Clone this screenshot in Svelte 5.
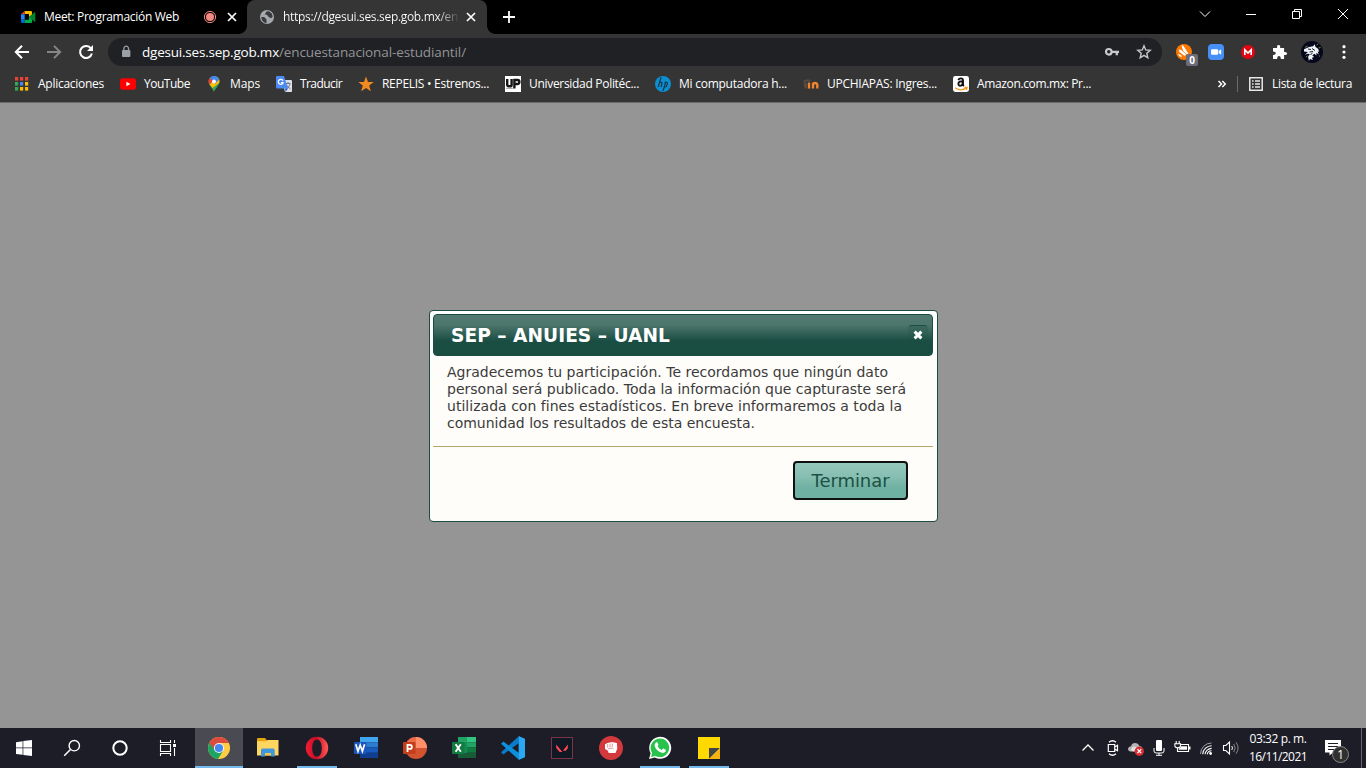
<script>
  // Spreads the letters of a label so that it fills the given width.
  function fit(node, width) {
    const range = document.createRange();
    range.selectNodeContents(node);
    const natural = range.getBoundingClientRect().width;
    node.style.letterSpacing = (width - natural) / node.textContent.length + 'px';
  }

  const bookmarks = [
    { icon: 'apps', text: 'Aplicaciones', w: 66 },
    { icon: 'youtube', text: 'YouTube', w: 46 },
    { icon: 'maps', text: 'Maps', w: 30 },
    { icon: 'translate', text: 'Traducir', w: 42 },
    { icon: 'star', text: 'REPELIS • Estrenos...', w: 107 },
    { icon: 'up', text: 'Universidad Politéc...', w: 110 },
    { icon: 'hp', text: 'Mi computadora h...', w: 108 },
    { icon: 'moodle', text: 'UPCHIAPAS: Ingres...', w: 110 },
    { icon: 'amazon', text: 'Amazon.com.mx: Pr...', w: 114 }
  ];
  const apps = [
    { icon: 'chrome', active: true, open: true },
    { icon: 'explorer' },
    { icon: 'opera', open: true },
    { icon: 'word' },
    { icon: 'powerpoint' },
    { icon: 'excel' },
    { icon: 'vscode' },
    { icon: 'valorant' },
    { icon: 'fist' },
    { icon: 'whatsapp', open: true },
    { icon: 'notes', open: true }
  ];
</script>

{#snippet closeX()}
  <svg width="16" height="16" viewBox="0 0 16 16"><path d="M4 4l8 8M12 4l-8 8" stroke="#fff" stroke-width="1.7" /></svg>
{/snippet}

{#snippet favicon(name)}
  <svg width="16" height="16" viewBox="0 0 16 16">
    {#if name === 'apps'}
      {#each ['#ea4335', '#ea4335', '#ea4335', '#34a853', '#4285f4', '#fbbc04', '#34a853', '#fbbc04', '#fbbc04'] as c, i}
        <rect x={1 + (i % 3) * 5} y={1 + Math.floor(i / 3) * 5} width="3.2" height="3.6" fill={c} />
      {/each}
    {:else if name === 'youtube'}
      <rect y="2.3" width="16" height="11.4" rx="2.6" fill="#f00" /><path d="M6.4 5.7v4.6l4-2.3z" fill="#fff" />
    {:else if name === 'maps'}
      <path d="M8 16C7 12 2.6 10 2.6 5.4A5.4 5.4 0 0 1 13.4 5.4C13.4 10 9 12 8 16z" fill="#34a853" />
      <path d="M3.3 8.1l7.9-7.2A5.5 5.5 0 0 1 13.2 7L6.5 12z" fill="#fbbc04" />
      <path d="M3.9 2A5.4 5.4 0 0 1 11.2.9L6 6.7z" fill="#4285f4" /><path d="M3.9 2L7 5 3.5 8.4A5.3 5.3 0 0 1 3.9 2z" fill="#ea4335" />
      <path d="M11.2.9A5.4 5.4 0 0 1 13 3.4L9 8 7 5.5z" fill="#4285f4" /><circle cx="8" cy="5.5" r="2" fill="#fff" />
    {:else if name === 'translate'}
      <path d="M6 4h9a1 1 0 0 1 1 1v10a1 1 0 0 1-1 1H9z" fill="#dcdfe3" />
      <path d="M9.5 7.5h5M12 6v1.5M14 8c-.6 2.4-2 3.6-4 4.7M10.4 8.5c1 2 2 3.2 4 4.2" stroke="#6d7b8d" fill="none" />
      <path d="M1 0h7l4 12.5H1a1 1 0 0 1-1-1V1a1 1 0 0 1 1-1z" fill="#4c8bf5" /><path d="M9 12.5h3L9.6 16z" fill="#3367d6" />
      <path d="M7 4.6A2.5 2.5 0 1 0 7.2 6.6H5" stroke="#fff" stroke-width="1.2" fill="none" />
    {:else if name === 'star'}
      <path d="M8 .5l2 5.4 5.7.2-4.5 3.5 1.6 5.6L8 12l-4.8 3.2 1.6-5.6L.3 6.1 6 5.9z" fill="#f28a22" />
    {:else if name === 'up'}
      <rect width="16" height="16" fill="#fff" />
      <path d="M2.2 3v5.4q0 1.8 1.8 1.8h1.6q1 0 1-1V3M9.4 12.5V4h3q2 0 2 1.9T12.2 8H9.4" stroke="#141414" stroke-width="2.4" fill="none" /><path d="M1 12.3h6.8" stroke="#777" stroke-width=".8" />
    {:else if name === 'hp'}
      <circle cx="8" cy="8" r="8" fill="#0b8fd0" />
      <path d="M6.1 1.2L3.3 11M4.7 6.4h1.4q1.2 0 .9 1.2L6 11M10.8 5.7L8 15M9.5 6.4h2q1.2 0 .8 1.4l-.6 2q-.3 1-1.4 1H8.8" stroke="#17364d" stroke-width="1.2" fill="none" />
    {:else if name === 'moodle'}
      <path d="M0 5l4-1.7 4 .5-1 2H3L2 7v4.5H.8V6z" fill="#514a46" />
      <path d="M3 7v5.6" stroke="#7a4d2c" stroke-width="1.4" />
      <path d="M6 6.6v6" stroke="#ef8430" stroke-width="2.3" /><path d="M10 12.6V7M10 9q0-2 2-2t2.3 2v3.6" stroke="#ef8430" stroke-width="2.4" fill="none" />
    {:else if name === 'amazon'}
      <rect width="16" height="16" rx="2.4" fill="#fff" />
      <path d="M5.3 4.2Q6.1 2.3 8 2.4t2 2.2v4q0 .9 1 1.4M9.7 5.3Q5.4 5.3 5.4 7.7t2.4 1.9Q9.7 9.5 9.8 6.4" stroke="#111" stroke-width="1.9" fill="none" />
      <path d="M2 11.7q6 4.2 11.5.2M11.5 11.5h2.6l-.7 2.5" stroke="#f79a1b" stroke-width="1.3" fill="none" />
    {/if}
  </svg>
{/snippet}

{#snippet appIcon(name)}
  <svg width="24" height="24" viewBox="0 0 24 24">
    {#if name === 'chrome'}
      <circle cx="12" cy="12" r="11" fill="#ffcd43" />
      <path d="M12 12L2.5 6.5A11 11 0 0 0 11 23l5-8z" fill="#1da462" /><path d="M12 12v-5h9.8A11 11 0 0 0 2.4 6.7L7.5 14z" fill="#dd4b3e" />
      <circle cx="12" cy="12" r="5.1" fill="#f4f4f4" /><circle cx="12" cy="12" r="4.1" fill="#4688f1" />
    {:else if name === 'explorer'}
      <path d="M1 3q0-1 1-1h7l2 2.3h11V7H1z" fill="#e5a50f" /><path d="M1 5.3h9L12 4h10.5v15.5H1z" fill="#ffd760" />
      <path d="M5 20.5V14q0-1.5 1.5-1.5h10.8q1.4 0 1.4 1.5v6.5h-4V17H9v3.5z" fill="#3f97dd" /><path d="M9 17h5.7v2.5H9z" fill="#f6c447" />
    {:else if name === 'opera'}
      <defs><linearGradient id="op" x1="0" x2="1"><stop offset="0" stop-color="#f41c35" /><stop offset=".45" stop-color="#c70e25" /><stop offset="1" stop-color="#ff5a55" /></linearGradient></defs>
      <path fill-rule="evenodd" fill="url(#op)" d="M12 .8a11.2 11.2 0 1 0 0 22.4A11.2 11.2 0 1 0 12 .8zM12 3.4c3 0 4.8 3.6 4.8 8.6s-1.8 8.6-4.8 8.6S7.2 17 7.2 12 9 3.4 12 3.4z" />
    {:else if name === 'word' || name === 'excel'}
      {#each (name === 'word' ? ['#41a5ee', '#2b7cd3', '#185abd', '#103f91'] : ['#33c481', '#21a366', '#107c41', '#185c37']) as c, i}
        <rect x="6" y={1 + i * 5.25} width="18" height="5.25" fill={c} />
      {/each}
      {#if name === 'excel'}<path d="M6 1h9v16H6z" fill="#178b51" /><path d="M6 1h9v5.3H6z" fill="#21a366" />{/if}
      <rect x="0" y="6" width="12.5" height="12" rx="1" fill={name === 'word' ? '#1b56bd' : '#107c41'} />
      {#if name === 'word'}<path d="M1.8 8.2L4 15.3 6.2 9 8.4 15.3 10.6 8.2" stroke="#fff" stroke-width="1.7" fill="none" />
      {:else}<path d="M3.6 8.2l5.2 7.6M8.8 8.2l-5.2 7.6" stroke="#fff" stroke-width="1.9" />{/if}
    {:else if name === 'powerpoint'}
      <circle cx="13" cy="12" r="11" fill="#d35230" /><path d="M13 12V1A11 11 0 0 0 2 12z" fill="#ed6c47" /><path d="M13 12V1a11 11 0 0 1 11 11z" fill="#ff8f6b" />
      <rect y="6" width="12.5" height="12" rx="1" fill="#c43e1c" /><path d="M4.5 16V8.9h2.2q2.2 0 2.2 2t-2.2 2H4.7" stroke="#fff" stroke-width="1.8" fill="none" />
    {:else if name === 'vscode'}
      <path d="M17.8.3L24 3v18l-6.2 2.8z" fill="#29a8f2" /><path d="M17.8.3L0 16.3l2.3 2.2L18 7z" fill="#0b7ac8" /><path d="M17.8 23.7L0 7.8l2.3-2.2L18 17z" fill="#0d91df" /><path d="M17.8.3v23.4L24 21V3z" fill="#2aa9f3" />
    {:else if name === 'valorant'}
      <rect x="1.5" y="1.5" width="21" height="21" fill="#101823" stroke="#7d3347" /><path d="M6.2 8.4l6.2 7.5H9.6l-3.4-4zM17.8 8.4v3.8l-2 2.5h-2.9z" fill="#ff4655" />
    {:else if name === 'fist'}
      <circle cx="12" cy="12" r="12" fill="#d3383d" />
      <path d="M6 8.2l2.6-1.2 2.3-.4 2.2-.5 2 .3 2.8.7.4 5.5-1.8 4.4H9.7l-1-2.6L6 13z" fill="#fff" /><path d="M8.7 8v3.7M11 7.6v3.6M13.3 7.4v3.4M9.2 12.9l4-.9 1.3 1" stroke="#d3383d" stroke-width=".55" fill="none" />
    {:else if name === 'whatsapp'}
      <path d="M1 23l1.6-5.8A11 11 0 1 1 6.8 21.4z" fill="#fff" /><path d="M3 21l1.1-4.1A9.3 9.3 0 1 1 7.3 19.9z" fill="#29c24d" />
      <path d="M8.2 6.3q1-.5 1.4.5l.8 1.8q.1.6-.9 1.6 1.6 2.8 4.3 3.7l1.3-1.4 2.7 1.3q.3 2.9-3 3.1Q8 15.8 6.6 9.5q-.2-2 1.6-3.2z" fill="#fff" />
    {:else if name === 'notes'}
      <path d="M1 1h22v22H1z" fill="#ffd900" /><path d="M12 23V12h11z" fill="#414449" /><path d="M12 23l11-11v11z" fill="#f6b40e" />
    {/if}
  </svg>
{/snippet}

<div class="screen">
  <header class="tabs">
    <div class="tab first">
      <svg width="16" height="16" viewBox="0 0 16 16">
        <path d="M4.7 2H11q1 0 1 1v3.5L9 8V5H4.7z" fill="#fbbc04" /><path d="M4.7 2v3.3H1z" fill="#ea4335" /><path d="M1 5.3h3.7v5.4H1z" fill="#2684fc" />
        <path d="M1 10.7h3.7V14H2q-1 0-1-1z" fill="#0066da" /><path d="M4.7 10.7H9V8l3-2.5V13q0 1-1 1H4.7z" fill="#00ac47" /><path d="M9 8l5.5-4.7q.8-.4.8.4v8.6q0 .8-.8.4z" fill="#00832d" />
      </svg>
      <span class="label" use:fit={135}>Meet: Programación Web</span>
      <svg class="rec" width="14" height="14" viewBox="0 0 14 14"><circle cx="7" cy="7" r="5.6" fill="none" stroke="#f28b82" /><circle cx="7" cy="7" r="4" fill="#f28b82" /></svg>
      {@render closeX()}
    </div>
    <div class="tab current">
      <svg width="16" height="16" viewBox="0 0 16 16"><circle cx="8" cy="8" r="7" fill="#a5a9ae" /><path d="M2.2 8h3l2.3 2.4v3.8q-4.8-.8-5.3-6.2zM7.5 2.5l2.3-.2 3 2.2.9 3.3-1.6 1.4-2.4-1.1-1.8-2.3-2.1-.3z" fill="#383a3d" /></svg>
      <span class="label fade" use:fit={175}>https://dgesui.ses.sep.gob.mx/en</span>
      {@render closeX()}
    </div>
    <svg class="plus" width="14" height="14" viewBox="0 0 14 14"><path d="M7 1v12M1 7h12" stroke="#fff" stroke-width="1.8" /></svg>
    <div class="window">
      <svg width="12" height="12" viewBox="0 0 12 12"><path d="M1 3.5l5 5 5-5" /></svg>
      <svg width="12" height="12" viewBox="0 0 12 12"><path d="M1 6.5h10" /></svg>
      <svg width="12" height="12" viewBox="0 0 12 12"><path d="M1.5 3.5h7v7h-7zM3.5 3.5v-2h7v7h-2" /></svg>
      <svg width="12" height="12" viewBox="0 0 12 12"><path d="M1 1l10 10M11 1L1 11" /></svg>
    </div>
  </header>

  <div class="toolbar">
    <svg width="16" height="16" viewBox="0 0 16 16"><path d="M15 8H2M8 1.8L1.8 8 8 14.2" stroke="#fff" stroke-width="2" fill="none" /></svg>
    <svg width="16" height="16" viewBox="0 0 16 16"><path d="M1 8h13M8 1.8L14.2 8 8 14.2" stroke="#868686" stroke-width="1.9" fill="none" /></svg>
    <svg width="16" height="16" viewBox="0 0 16 16"><path d="M13 4.5A6 6 0 1 0 13.9 9.5" stroke="#fff" stroke-width="2" fill="none" /><path d="M15 1v6H9z" fill="#fff" /></svg>
    <div class="omnibox">
      <svg width="10" height="14" viewBox="0 0 10 14"><rect x="1" y="5" width="8.4" height="7" rx="1" fill="#9aa0a6" /><path d="M2.9 5V3.5a2.3 2.3 0 0 1 4.6 0V5" stroke="#9aa0a6" stroke-width="1.3" fill="none" /></svg>
      <span class="url host" use:fit={137}>dgesui.ses.sep.gob.mx</span><span class="url path" use:fit={187}>/encuestanacional-estudiantil/</span>
      <svg class="key" width="16" height="12" viewBox="0 0 16 12"><circle cx="4.8" cy="5.8" r="2.8" fill="none" stroke="#c7c9cc" stroke-width="2.2" /><path d="M8 5.8h7M12.8 6v3.2" stroke="#c7c9cc" stroke-width="2.3" /></svg>
      <svg width="16" height="16" viewBox="0 0 16 16"><path d="M8 1.8l1.7 4.1 4.5.4-3.4 3 1 4.5L8 11.4l-3.8 2.4 1-4.5-3.4-3 4.5-.4z" fill="none" stroke="#c7c9cc" stroke-width="1.4" /></svg>
    </div>
    <div class="extensions">
      <div class="avast">
        <svg width="18" height="18" viewBox="0 0 18 18"><circle cx="9" cy="9" r="8" fill="#ff7800" /><path d="M6.5 2.6q1.2-.7 2 .5l4.9 7.3-1.2 1.4-4-3.8zM4.3 6.6q1-.5 1.9.4l5.2 4.8-2 .9L4.4 9Q3.7 7.8 4.3 6.6zM3.1 10.7q2.6.8 4.1 2.5l-1.5.7Q3.6 12.9 3.1 10.7z" fill="#fff" /></svg>
        <span class="badge">0</span>
      </div>
      <svg width="18" height="18" viewBox="0 0 18 18"><rect x="1" y="1" width="16" height="16" rx="4" fill="#468ff5" /><rect x="4" y="6.2" width="7.2" height="5.6" rx="1.2" fill="#fff" /><path d="M11.8 8l2.4-1.7v5.4L11.8 10z" fill="#fff" /></svg>
      <svg width="18" height="18" viewBox="0 0 18 18"><circle cx="9" cy="9" r="7" fill="#e30615" /><path d="M5.8 12V6.7L9 10l3.2-3.3V12" stroke="#fff" stroke-width="1.6" fill="none" /></svg>
      <svg width="18" height="18" viewBox="0 0 18 18"><path d="M2 5h4.2q-.7-3 1.4-3t1.5 3h4v4q3-.4 3 1.5t-3 1.5v4H9.8q0-3-1.8-3t-1.9 3H2v-4q2.8.1 2.8-1.7T2 8.6z" fill="#fff" /></svg>
      <svg width="22" height="22" viewBox="0 0 22 22"><circle cx="11" cy="11" r="11" fill="#05071d" /><path d="M3 8.2L8 6l4-.8 2-2 .2 2.4 3 2.4 1 3-1.5-.7 1 3.2-2.2-1.8-.2 2.8-1.8-1.7-2.2 1.5 1.8 1.7-2.2.8 1 2.2-3-1-1 2-.8-4.2 1.7-2.7-2-.4-2.8 1 2.8-2.8L3 10.5z" fill="#eef3f5" /><path d="M7 8l3 .5M11 7.5l3 2M8.5 11l3.5-.5M9.5 14l2-2.3" stroke="#05071d" stroke-width=".9" /><path d="M4 6.5L6.5 5M15.8 4.2l1.4-1.6M17.6 7l2-.6M17.8 14.5l1.3 1M5 16l1.5-1" stroke="#758b36" /></svg>
      <svg width="18" height="18" viewBox="0 0 18 18"><circle cx="9" cy="3.7" r="1.6" fill="#fff" /><circle cx="9" cy="9" r="1.6" fill="#fff" /><circle cx="9" cy="14.3" r="1.6" fill="#fff" /></svg>
    </div>
  </div>

  <nav class="bookmarks">
    {#each bookmarks as b}
      <div class="bookmark">{@render favicon(b.icon)}<span class="label" style:width="{b.w}px" use:fit={b.w}>{b.text}</span></div>
    {/each}
    <div class="reading">
      <svg width="10" height="10" viewBox="0 0 10 10"><path d="M1.5 2l3 3-3 3M5.3 2l3 3-3 3" stroke="#fff" stroke-width="1.5" fill="none" /></svg>
      <i></i>
      <svg width="14" height="14" viewBox="0 0 14 14"><path d="M.8.8h12.4v12.4H.8z" fill="none" stroke="#e8e8e8" stroke-width="1.5" /><path d="M3 4h1.6M6 4h5M3 7h1.6M6 7h5M3 10h1.6M6 10h5" stroke="#e8e8e8" stroke-width="1.5" /></svg>
      <span class="label" use:fit={80}>Lista de lectura</span>
    </div>
  </nav>

  <main>
    <section class="dialog">
      <div class="title">
        <h1 use:fit={219}>SEP – ANUIES – UANL</h1>
        <button class="close" aria-label="Cerrar"><svg width="12" height="12" viewBox="0 0 12 12"><path d="M2.6 2.6l6.8 6.8M9.4 2.6L2.6 9.4" stroke="#fff" stroke-width="3.1" /></svg></button>
      </div>
      <div class="message">
        <div><span use:fit={441}>Agradecemos tu participación. Te recordamos que ningún dato</span></div>
        <div><span use:fit={459}>personal será publicado. Toda la información que capturaste será</span></div>
        <div><span use:fit={455}>utilizada con fines estadísticos. En breve informaremos a toda la</span></div>
        <div><span use:fit={308}>comunidad los resultados de esta encuesta.</span></div>
      </div>
      <div class="actions"><button class="finish"><span use:fit={78}>Terminar</span></button></div>
    </section>
  </main>

  <footer class="taskbar">
    <div class="system">
      <svg width="16" height="16" viewBox="0 0 16 16"><path d="M0 2.2l6.6-1v6.3H0zM7.3 1.1L16 0v7.5H7.3zM0 8.3h6.6v6.5L0 13.9zM7.3 8.3H16V16l-8.7-1.1z" fill="#fff" /></svg>
    </div>
    <div class="system">
      <svg width="18" height="18" viewBox="0 0 18 18"><circle cx="11.3" cy="6.7" r="5.2" fill="none" stroke="#fff" stroke-width="1.4" /><path d="M7.5 10.5L1.2 16.8" stroke="#fff" stroke-width="1.5" /></svg>
    </div>
    <div class="system">
      <svg width="18" height="18" viewBox="0 0 18 18"><circle cx="9" cy="9" r="6.7" fill="none" stroke="#fff" stroke-width="2" /></svg>
    </div>
    <div class="system">
      <svg width="18" height="18" viewBox="0 0 18 18"><path d="M1.5 1v2.5h10V1M1.5 17v-2.5h10V17M1.5 5.5h10v7h-10zM15.5 1v3M15.5 9v8" stroke="#fff" stroke-width="1.1" fill="none" /><path d="M14 5h3v3h-3z" fill="#fff" /></svg>
    </div>
    <div class="apps">
      {#each apps as a}
        <div class="app" class:active={a.active} class:open={a.open}>{@render appIcon(a.icon)}</div>
      {/each}
    </div>
    <div class="tray">
      <svg width="14" height="16" viewBox="0 0 14 16"><path d="M1.5 10.5L7 5l5.5 5.5" stroke="#fff" stroke-width="1.3" fill="none" /></svg>
      <svg width="14" height="16" viewBox="0 0 14 16"><path d="M2.3 4.5h6.4v7H2.3zM8.7 7l2.8-1.6v5.2L8.7 9M3 2.3Q6.5-.8 10 2.3M3 13.7q3.5 3.1 7 0" stroke="#fff" stroke-width="1.2" fill="none" /></svg>
      <svg width="18" height="16" viewBox="0 0 18 16"><path d="M3 11.5q-2.5-1-2-3T4 6.2Q5 3 8 3t4.5 3q4 .5 3 5.5z" fill="#b4b4b4" /><path d="M4.5 11q-1-3.5 2.7-4.6L12 9v3z" fill="#e3e3e3" /><circle cx="12.3" cy="11.2" r="4.7" fill="#d92d33" /><path d="M10.4 9.3l3.8 3.8M14.2 9.3l-3.8 3.8" stroke="#fff" stroke-width="1.3" /></svg>
      <svg width="14" height="18" viewBox="0 0 14 18"><rect x="4" y="1" width="6" height="11" rx="1" fill="#fff" /><path d="M2 9v3q0 2 2 2h6q2 0 2-2V9M7 14v2.5M4 16.3h6" stroke="#fff" fill="none" /></svg>
      <svg width="18" height="16" viewBox="0 0 18 16"><path d="M7 4.5h8.5v7H4.5V9M3.2 1v3M6.2 1v3M1.8 3.8h5.7v2q0 2-2.8 2t-2.8-2zM4.6 7.5v4" stroke="#fff" fill="none" stroke-width="1.1" /><path d="M8 6.2h6v3.6H6V8.5q1.7-.3 2-2.3zM16 6.5h1.5v3H16z" fill="#fff" /></svg>
      <svg width="16" height="16" viewBox="0 0 16 16"><path d="M2.5 14A11 11 0 0 1 13.5 3" stroke="#a2a2a8" fill="none" /><path d="M4.7 14.2A9 9 0 0 1 13.7 5.8M7 14.3A6.7 6.7 0 0 1 13.6 8.4M9.2 14.3A4.5 4.5 0 0 1 13.5 10.7" stroke="#fff" stroke-width="1.1" fill="none" /><circle cx="12.6" cy="13.5" r="1.4" fill="#fff" /></svg>
      <svg width="18" height="16" viewBox="0 0 18 16"><path d="M1.5 5.5h2.3L7.5 2v12l-3.7-3.5H1.5z" stroke="#fff" fill="none" stroke-width="1.1" /><path d="M9.8 6q1.3 2 0 4" stroke="#fff" fill="none" /><path d="M11.7 4q3 4 0 8M14 2.3q4.2 5.7 0 11.4" stroke="#85858b" fill="none" /></svg>
      <div class="clock"><div><span use:fit={57}>03:32 p. m.</span></div><div><span use:fit={58}>16/11/2021</span></div></div>
      <div class="notice">
        <svg width="18" height="18" viewBox="0 0 18 18"><path d="M1 1h16v12.5H9l-3.5 3v-3H1z" fill="#fff" /><path d="M4 4.5h10M4 7.5h10M4 10.5h7" stroke="#1d1d28" /></svg>
        <span class="count">1</span>
      </div>
      <i class="edge"></i>
    </div>
  </footer>
</div>

<style>
  :global(body) { margin: 0; overflow: hidden; }
  .screen { width: 1366px; height: 768px; display: flex; flex-direction: column; font: 12px/16px "Open Sans", sans-serif; color: #fff; background: #959595; white-space: nowrap; }
  svg { display: block; flex: none; }
  button { padding: 0; }
  .label { flex: none; }
  .tabs { height: 34px; flex: none; background: #000; display: flex; }
  .tab { display: flex; align-items: center; height: 34px; box-sizing: border-box; }
  .first { width: 247px; padding-left: 20px; }
  .first .label { width: 135px; margin-left: 8px; }
  .rec { margin: 0 7px 0 24px; }
  .current { width: 240px; padding-left: 12px; background: #353535; border-radius: 8px 8px 0 0; position: relative; }
  .current::before, .current::after { content: ''; position: absolute; bottom: 0; width: 8px; height: 8px; }
  .current::before { left: -8px; background: radial-gradient(circle at 0 0, #000 7.5px, #353535 8px); }
  .current::after { right: -8px; background: radial-gradient(circle at 100% 0, #000 7.5px, #353535 8px); }
  .current .label { width: 175px; margin: 0 5px 0 8px; }
  .fade { background: linear-gradient(90deg, #fff 88%, #484848); background-clip: text; color: transparent; }
  .plus { margin: 10px 0 0 15px; }
  .window { margin: 8px 17px 0 auto; display: flex; gap: 34px; }
  .window svg { fill: none; stroke: #fff; stroke-width: 1; }
  .toolbar { height: 36px; flex: none; background: #353535; display: flex; align-items: center; padding-left: 14px; gap: 16px; }
  .toolbar > .omnibox { width: 1054px; height: 28px; margin-left: -2px; border-radius: 14px; background: #202124; display: flex; align-items: center; box-sizing: border-box; padding: 0 10px 0 13px; }
  .url { flex: none; font-size: 13.5px; line-height: 18px; }
  .host { width: 137px; margin-left: 11px; }
  .path { width: 187px; color: #929497; }
  .key { margin: 0 16px 0 auto; }
  .extensions { display: flex; align-items: center; gap: 14px; margin-left: -3px; }
  .extensions > svg:nth-of-type(4) { margin: 0 -2px; }
  .avast { position: relative; }
  .badge { position: absolute; left: 11px; top: 11px; width: 12px; height: 12px; border-radius: 2px; background: #6c6d78; font: bold 10px/12px "Open Sans", sans-serif; text-align: center; }
  .bookmarks { height: 33px; flex: none; box-sizing: border-box; border-bottom: 1px solid #696969; background: #353535; display: flex; align-items: center; gap: 16px; padding: 0 14px 4px; }
  .bookmark { display: flex; align-items: center; gap: 8px; }
  .reading { display: flex; align-items: center; margin-left: auto; }
  .reading i { width: 1px; height: 16px; background: #6b6b6b; margin: 0 11px 0 10px; }
  .reading .label { margin-left: 9px; width: 80px; }
  main { height: 625px; flex: none; display: flex; justify-content: center; align-items: flex-start; }
  .dialog { width: 509px; height: 212px; margin: 207px 0 0 1px; box-sizing: border-box; border: 1px solid #1b4d43; border-radius: 4px; padding: 3px 4px 3px 3px; background: linear-gradient(#fff, #fefdfa 55px); font-family: "DejaVu Sans", sans-serif; color: #3b3b3b; }
  .title { height: 42px; box-sizing: border-box; border: 1px solid #194d42; border-radius: 4px; background: linear-gradient(#537a71, #4c756b 25%, #1a4e43 65%, #194d42); display: flex; align-items: center; justify-content: space-between; padding: 0 4px 0 17px; }
  h1 { margin: 2px 0 0; font-size: 18.6px; line-height: 24px; color: #fff; width: 219px; }
  .close { width: 20px; height: 20px; border: 1px solid transparent; border-top-color: #1a4e43; border-radius: 4px; background: linear-gradient(#1a4e4340, transparent); display: grid; place-items: center; }
  .message { padding: 7px 14px 0; height: 90px; box-sizing: border-box; border-bottom: 1px solid #b8a66d; font-size: 14px; line-height: 17px; margin-top: 1px; }
  .actions { display: flex; justify-content: flex-end; padding: 14px 25px 0 0; }
  .finish { width: 115px; height: 39px; border: 2px solid #101010; border-radius: 4px; background: linear-gradient(#94c8bc, #86beb1 40%, #6fb1a2 70%, #6fb1a2); color: #1c5144; font: 18px/24px "DejaVu Sans", sans-serif; }
  .taskbar { height: 40px; background: #1d1d28; display: flex; }
  .system { width: 48px; display: grid; place-items: center; }
  .apps { display: flex; gap: 1px; margin-left: 3px; }
  .app { width: 48px; height: 40px; display: grid; place-items: center; background: linear-gradient(#76b9ed, #76b9ed) center bottom / 0 2px no-repeat; }
  .app.open { background-size: 40px 2px; }
  .app.active { background-size: 48px 2px; background-color: #4a4a53; }
  .tray { display: flex; align-items: center; margin-left: auto; gap: 7px; }
  .tray > svg:nth-of-type(1) { margin-right: 4px; }
  .tray > svg:nth-of-type(7) { margin-left: 1px; }
  .clock { width: 60px; margin: 0 9px 0 1px; text-align: center; line-height: 18px; }
  .notice { position: relative; margin-right: 12px; }
  .count { position: absolute; left: 8px; top: 7px; width: 15px; height: 15px; border: 1px solid #888; border-radius: 50%; background: #30302f; text-align: center; line-height: 15px; font-size: 12.5px; }
  .edge { width: 1px; height: 40px; background: #65656d; margin-right: 4px; }
</style>
